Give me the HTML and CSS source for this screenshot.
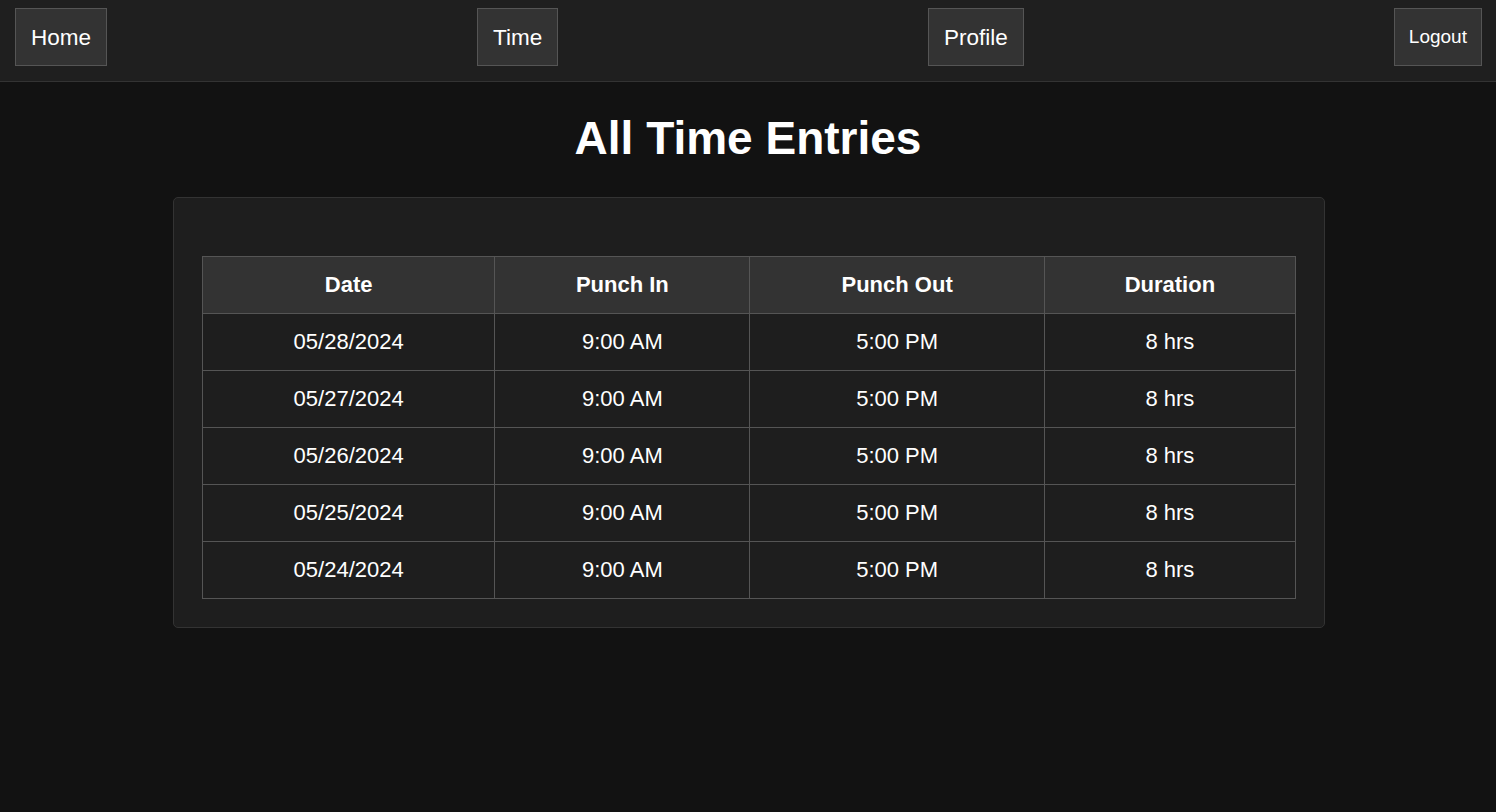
FILE: index.html
```html
<!DOCTYPE html>
<html lang="en">
<head>
<meta charset="utf-8">
<title>All Time Entries</title>
<link rel="stylesheet" href="styles.css">
</head>
<body>
<header class="nav">
  <button class="nav-btn">Home</button>
  <button class="nav-btn">Time</button>
  <button class="nav-btn">Profile</button>
  <button class="nav-btn nav-btn-small">Logout</button>
</header>
<main class="main">
  <h1 class="title">All Time Entries</h1>
  <section class="card">
    <table class="entries">
      <thead>
        <tr><th>Date</th><th>Punch In</th><th>Punch Out</th><th>Duration</th></tr>
      </thead>
      <tbody>
        <tr><td>05/28/2024</td><td>9:00 AM</td><td>5:00 PM</td><td>8 hrs</td></tr>
        <tr><td>05/27/2024</td><td>9:00 AM</td><td>5:00 PM</td><td>8 hrs</td></tr>
        <tr><td>05/26/2024</td><td>9:00 AM</td><td>5:00 PM</td><td>8 hrs</td></tr>
        <tr><td>05/25/2024</td><td>9:00 AM</td><td>5:00 PM</td><td>8 hrs</td></tr>
        <tr><td>05/24/2024</td><td>9:00 AM</td><td>5:00 PM</td><td>8 hrs</td></tr>
      </tbody>
    </table>
  </section>
</main>
</body>
</html>
```

FILE: styles.css
```css
* { box-sizing: border-box; }
html, body {
  margin: 0;
  padding: 0;
  background: #121212;
  color: #ffffff;
  font-family: "Liberation Sans", Arial, Helvetica, sans-serif;
}
.nav {
  display: flex;
  justify-content: space-between;
  align-items: flex-start;
  height: 82px;
  padding: 8px 14px 0 15px;
  background: #1f1f1f;
  border-bottom: 1px solid #333333;
}
.nav-btn {
  height: 58px;
  padding: 1px 15px 0 15px;
  background: #333333;
  border: 1px solid #555555;
  color: #ffffff;
  font-family: "Liberation Sans", Arial, Helvetica, sans-serif;
  font-size: 22.5px;
  cursor: pointer;
}
.nav-btn-small {
  padding: 0 14px;
  font-size: 19px;
}
.main {
  display: flex;
  flex-direction: column;
  align-items: center;
  padding-top: 28px;
}
.title {
  margin: 0 0 31px 0;
  font-size: 46px;
  font-weight: bold;
  line-height: 56px;
}
.card {
  width: 1152px;
  margin-left: 2px;
  padding: 58px 28px 28px 28px;
  background: #1e1e1e;
  border: 1px solid #333333;
  border-radius: 5px;
}
.entries {
  width: 100%;
  border-collapse: collapse;
  table-layout: fixed;
}
.entries th,
.entries td {
  height: 57px;
  padding: 0 10px;
  border: 1px solid #555555;
  text-align: center;
  font-size: 22px;
}
.entries th {
  background: #333333;
  font-weight: bold;
}
.entries td {
  background: #1e1e1e;
}
.entries th:nth-child(1) { width: 292px; }
.entries th:nth-child(2) { width: 255px; }
.entries th:nth-child(3) { width: 294px; }
.entries th:nth-child(4) { width: 251px; }
```
